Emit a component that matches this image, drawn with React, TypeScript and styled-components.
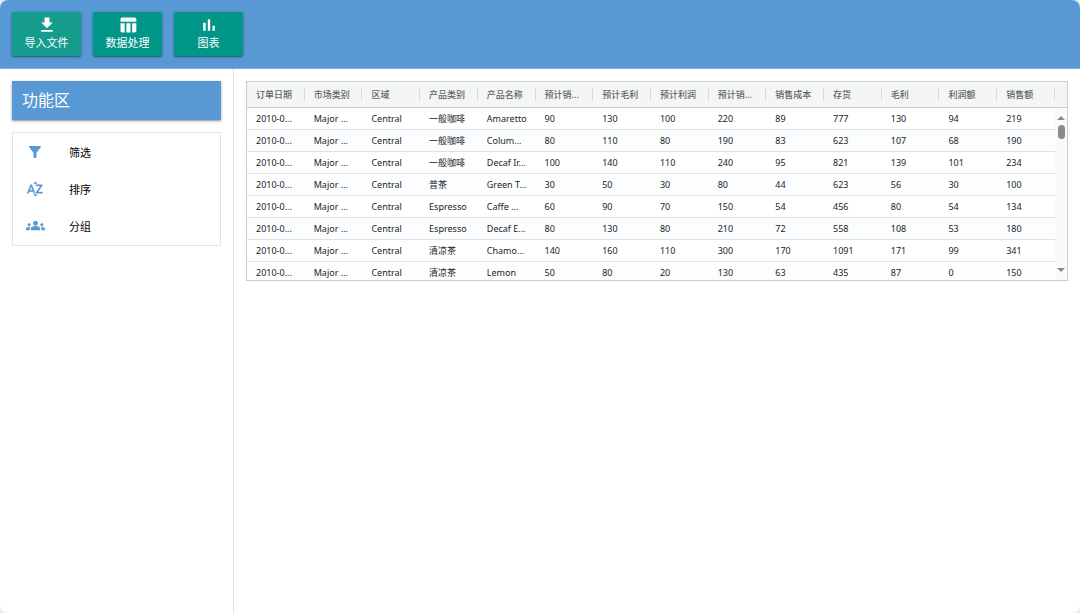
import React from 'react';
import styled, { createGlobalStyle } from 'styled-components';
import {
  MdFileDownload,
  MdFilterAlt,
  MdGroups,
  MdSortByAlpha,
  MdTableChart,
} from 'react-icons/md';

const GlobalStyle = createGlobalStyle`
  *, *::before, *::after { box-sizing: border-box; }
  html { background: #e9eaea; }
  body {
    margin: 0;
    font-family: "Noto Sans", "Noto Sans CJK SC", sans-serif;
    color: #181d1f;
  }
`;

const Window = styled.div`
  display: flex;
  flex-direction: column;
  min-height: 100vh;
  border-radius: 8px;
  overflow: hidden;
  background: #fff;
`;

const Toolbar = styled.header`
  display: flex;
  gap: 12px;
  padding: 12px;
  background: #5898d4;
  border-bottom: 1px solid #7db0df;
`;

const ToolButton = styled.button<{ $hovered?: boolean }>`
  display: flex;
  flex-direction: column;
  align-items: center;
  width: 69px;
  height: 44px;
  padding: 3px 0 0;
  border: 0;
  border-radius: 2px;
  background: ${(p) => (p.$hovered ? '#159c8d' : '#009688')};
  color: #fff;
  font: inherit;
  font-size: 11px;
  line-height: 16px;
  box-shadow: 0 1px 3px rgba(0, 0, 0, 0.35), 0 1px 1px rgba(0, 0, 0, 0.2);
  cursor: pointer;

  svg {
    display: block;
    flex: none;
  }
`;

const Content = styled.div`
  display: flex;
  flex: 1;
`;

const Sidebar = styled.aside`
  flex: none;
  width: 234px;
  padding: 12px;
  border-right: 1px solid #e0e0e0;
`;

const SidebarTitle = styled.h1`
  margin: 0 0 12px;
  padding: 8px 10px;
  background: #5898d4;
  color: #fff;
  font-size: 16px;
  font-weight: 400;
  line-height: 23px;
  box-shadow: 0 1px 3px rgba(0, 0, 0, 0.3), 0 1px 1px rgba(0, 0, 0, 0.15);
`;

const Menu = styled.nav`
  display: flex;
  flex-direction: column;
  padding-bottom: 1px;
  border: 1px solid #e4e4e4;
  border-radius: 1px;
`;

const MenuItem = styled.button`
  display: flex;
  align-items: center;
  gap: 24px;
  height: 37px;
  padding: 0 12px;
  border: 0;
  background: transparent;
  color: #000;
  font: inherit;
  font-size: 11px;
  text-align: left;
  cursor: pointer;
`;

const MenuIcon = styled.span<{ $bold?: boolean }>`
  display: flex;
  justify-content: center;
  width: 20px;
  color: #5898d4;

  svg {
    flex: none;
    stroke-width: 0;
  }

  path:not([fill='none']) {
    stroke: currentColor;
    stroke-width: ${(p) => (p.$bold ? 0.6 : 0)};
  }
`;

const Main = styled.main`
  flex: 1;
  min-width: 0;
  padding: 12px;
`;

const GridFrame = styled.div`
  display: flex;
  height: 200px;
  border: 1px solid #c9cdd0;
  overflow: hidden;
`;

const Table = styled.table`
  flex: 1;
  width: 0;
  height: max-content;
  table-layout: fixed;
  border-collapse: separate;
  border-spacing: 0;
  font-size: 9px;
`;

const HeadCell = styled.th`
  height: 26px;
  padding: 0;
  border-bottom: 1px solid #c9cdd0;
  background: #f4f6f6;
  color: #5f6567;
  font-weight: 500;
  text-align: left;
`;

const HeadLabel = styled.span`
  display: block;
  padding-left: 9px;
  border-right: 1px solid #d8dcde;
  line-height: 13px;
  white-space: nowrap;
`;

const Row = styled.tr`
  background: #fff;

  &:nth-child(even) { background: #fcfdfe; }
`;

const Cell = styled.td`
  height: 22px;
  padding: 0 0 0 9px;
  border-bottom: 1px solid #dde2e4;
  white-space: nowrap;
  overflow: hidden;
`;

const ScrollColumn = styled.div`
  display: flex;
  flex-direction: column;
  flex: none;
  width: 12px;
`;

const ScrollHead = styled.div`
  flex: none;
  height: 26px;
  background: #f4f6f6;
  border-bottom: 1px solid #c9cdd0;
`;

const ScrollTrack = styled.div`
  display: flex;
  flex: 1;
  flex-direction: column;
  align-items: center;
  padding: 8px 0;
  background: #fafafa;
`;

const ScrollThumb = styled.div`
  width: 7px;
  height: 14px;
  margin: 5px 0 auto;
  border-radius: 4px;
  background: #8b8b8b;
`;

const Arrow = styled.span<{ $down?: boolean }>`
  border: 4px solid transparent;
  border-top: ${(p) => (p.$down ? '4px solid #8b8b8b' : '0')};
  border-bottom: ${(p) => (p.$down ? '0' : '4px solid #8b8b8b')};
`;

const BarsIcon = () => (
  <svg width="20" height="20" viewBox="0 0 24 24" fill="currentColor" aria-hidden="true">
    <path d="M5 9.2h3V19H5zM10.6 5h2.8v14h-2.8zM16.2 13H19v6h-2.8z" />
  </svg>
);

const columns = [
  '订单日期', '市场类别', '区域', '产品类别', '产品名称', '预计销...', '预计毛利',
  '预计利润', '预计销...', '销售成本', '存货', '毛利', '利润额', '销售额',
];

const products: [string, string, ...number[]][] = [
  ['一般咖啡', 'Amaretto', 90, 130, 100, 220, 89, 777, 130, 94, 219],
  ['一般咖啡', 'Colum...', 80, 110, 80, 190, 83, 623, 107, 68, 190],
  ['一般咖啡', 'Decaf Ir...', 100, 140, 110, 240, 95, 821, 139, 101, 234],
  ['普茶', 'Green T...', 30, 50, 30, 80, 44, 623, 56, 30, 100],
  ['Espresso', 'Caffe ...', 60, 90, 70, 150, 54, 456, 80, 54, 134],
  ['Espresso', 'Decaf E...', 80, 130, 80, 210, 72, 558, 108, 53, 180],
  ['清凉茶', 'Chamo...', 140, 160, 110, 300, 170, 1091, 171, 99, 341],
  ['清凉茶', 'Lemon', 50, 80, 20, 130, 63, 435, 87, 0, 150],
];

const rows = products.map((product) => ['2010-0...', 'Major ...', 'Central', ...product]);

export default function App() {
  return (
    <>
      <GlobalStyle />
      <Window>
        <Toolbar>
          <ToolButton type="button" $hovered>
            <MdFileDownload size={20} />
            导入文件
          </ToolButton>
          <ToolButton type="button">
            <MdTableChart size={20} />
            数据处理
          </ToolButton>
          <ToolButton type="button">
            <BarsIcon />
            图表
          </ToolButton>
        </Toolbar>
        <Content>
          <Sidebar>
            <SidebarTitle>功能区</SidebarTitle>
            <Menu>
              <MenuItem type="button">
                <MenuIcon><MdFilterAlt size={18} /></MenuIcon>
                筛选
              </MenuItem>
              <MenuItem type="button">
                <MenuIcon $bold><MdSortByAlpha size={18} /></MenuIcon>
                排序
              </MenuItem>
              <MenuItem type="button">
                <MenuIcon><MdGroups size={19} /></MenuIcon>
                分组
              </MenuItem>
            </Menu>
          </Sidebar>
          <Main>
            <GridFrame>
              <Table>
                <thead>
                  <tr>
                    {columns.map((label, i) => (
                      <HeadCell key={i} scope="col">
                        <HeadLabel>{label}</HeadLabel>
                      </HeadCell>
                    ))}
                  </tr>
                </thead>
                <tbody>
                  {rows.map((row, r) => (
                    <Row key={r}>
                      {row.map((value, c) => (
                        <Cell key={c}>{value}</Cell>
                      ))}
                    </Row>
                  ))}
                </tbody>
              </Table>
              <ScrollColumn>
                <ScrollHead />
                <ScrollTrack>
                  <Arrow />
                  <ScrollThumb />
                  <Arrow $down />
                </ScrollTrack>
              </ScrollColumn>
            </GridFrame>
          </Main>
        </Content>
      </Window>
    </>
  );
}
